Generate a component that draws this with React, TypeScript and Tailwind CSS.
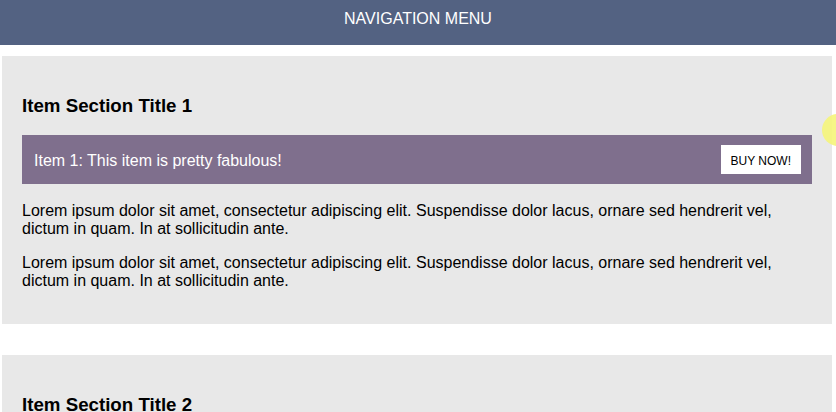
import React from 'react';

const lorem =
  'Lorem ipsum dolor sit amet, consectetur adipiscing elit. Suspendisse dolor lacus, ornare sed hendrerit vel, dictum in quam. In at sollicitudin ante.';

function Section({ n }: { n: number }) {
  return (
    <section className="ml-[2px] w-[830px] bg-[#e8e8e8] px-[20px] pb-[18px] pt-[20px]">
      <h3 className="my-[18.72px] text-[18.72px] font-bold leading-[21.5px]">Item Section Title {n}</h3>
      <div className="flex h-[49px] items-center justify-between bg-[#7f6f8d] pl-[12px] pr-[11px]">
        <span className="pt-[3px] text-[16px] text-white">Item {n}: This item is pretty fabulous!</span>
        <button className="h-[29px] bg-white px-[10px] pt-[3px] text-[12px] text-black">BUY NOW!</button>
      </div>
      <p className="mb-[16px] mt-[18px] text-[16px] leading-[18px]">{lorem}</p>
      <p className="my-[16px] text-[16px] leading-[18px]">{lorem}</p>
    </section>
  );
}

export default function App() {
  return (
    <div className="relative h-[412px] w-[836px] overflow-hidden bg-white font-['Liberation_Sans',Arial,sans-serif] text-black">
      <header className="h-[45px] bg-[#536282] pt-[10px] text-center text-[16px] leading-[18px] text-white">
        NAVIGATION MENU
      </header>
      <div className="mt-[11px] flex flex-col gap-[31px]">
        <Section n={1} />
        <Section n={2} />
      </div>
      {/* cursor highlight */}
      <div className="absolute left-[822px] top-[114px] h-[32px] w-[32px] rounded-full bg-[#f5f57a]/90" />
    </div>
  );
}
